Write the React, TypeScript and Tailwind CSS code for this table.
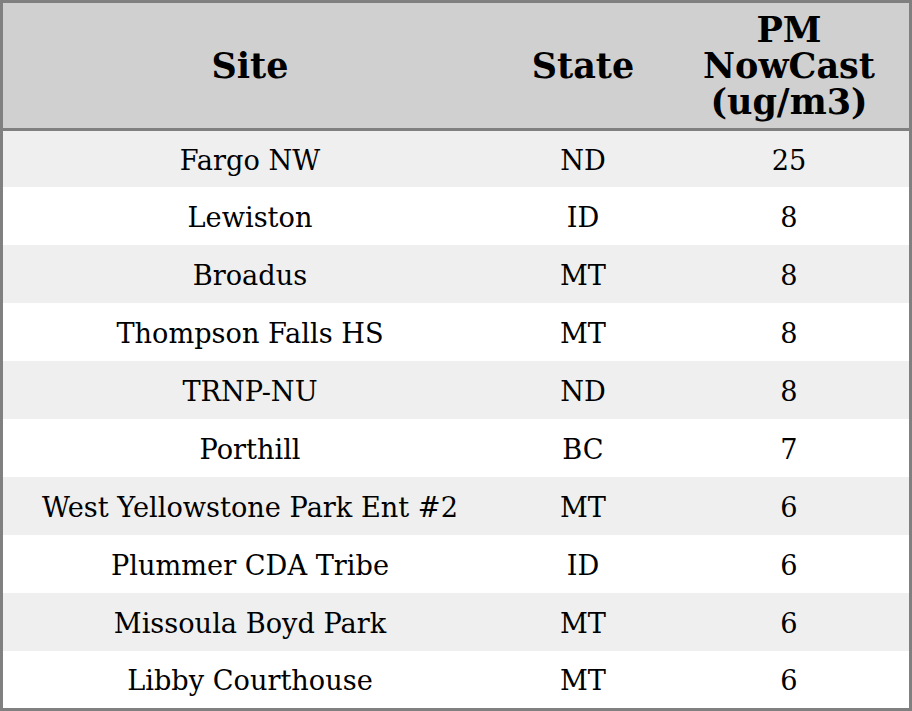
import React from 'react';

const rows = [
  { site: 'Fargo NW', state: 'ND', pm: '25' },
  { site: 'Lewiston', state: 'ID', pm: '8' },
  { site: 'Broadus', state: 'MT', pm: '8' },
  { site: 'Thompson Falls HS', state: 'MT', pm: '8' },
  { site: 'TRNP-NU', state: 'ND', pm: '8' },
  { site: 'Porthill', state: 'BC', pm: '7' },
  { site: 'West Yellowstone Park Ent #2', state: 'MT', pm: '6' },
  { site: 'Plummer CDA Tribe', state: 'ID', pm: '6' },
  { site: 'Missoula Boyd Park', state: 'MT', pm: '6' },
  { site: 'Libby Courthouse', state: 'MT', pm: '6' },
];

export default function App() {
  return (
    <div className="w-[912px] h-[711px] bg-white text-black font-['DejaVu_Serif',serif]">
      <div className="w-full h-full border-[3px] border-[#808080] flex flex-col">
        <div className="flex h-[128px] shrink-0 bg-[#d0d0d0] border-b-[3px] border-[#808080] text-[35px] leading-[36px] font-bold">
          <div className="w-[494px] flex items-center justify-center">Site</div>
          <div className="w-[172px] flex items-center justify-center">State</div>
          <div className="flex-1 flex items-center justify-center text-center">
            PM
            <br />
            NowCast
            <br />
            (ug/m3)
          </div>
        </div>
        <div className="flex-1 flex flex-col text-[27.2px]">
          {rows.map((r, i) => (
            <div
              key={i}
              className={`flex items-center shrink-0 pt-[4px] ${i === 0 ? 'h-[56px]' : i === rows.length - 1 ? 'flex-1' : 'h-[58px]'} ${
                i % 2 === 0 ? 'bg-[#efefef]' : 'bg-white'
              }`}
            >
              <div className="w-[494px] text-center">{r.site}</div>
              <div className="w-[172px] text-center">{r.state}</div>
              <div className="flex-1 text-center">{r.pm}</div>
            </div>
          ))}
        </div>
      </div>
    </div>
  );
}
